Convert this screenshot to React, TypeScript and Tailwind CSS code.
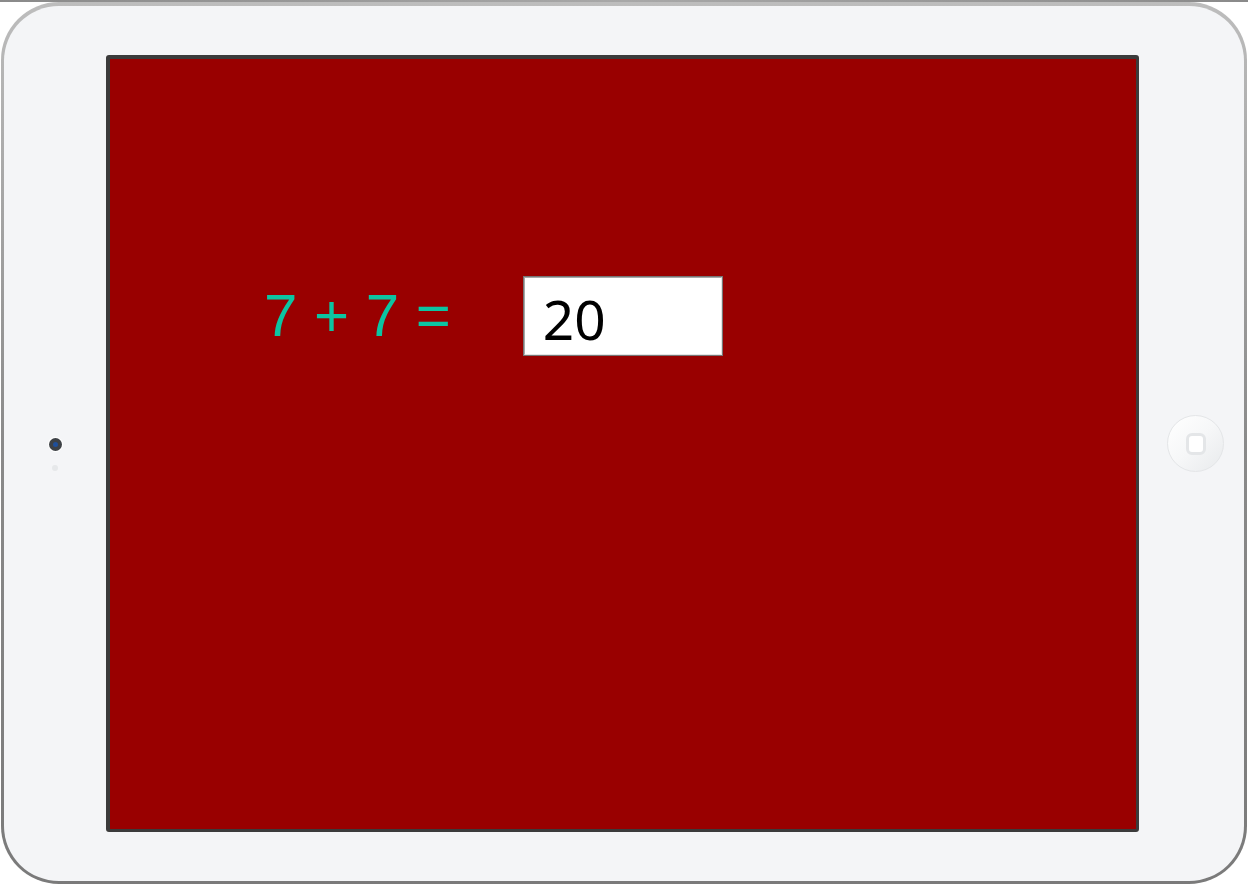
import React from "react";

export default function App() {
  return (
    <div className="flex h-[886px] w-[1248px] flex-col bg-white">
      <div className="h-[2px] bg-gradient-to-r from-[#8a8a8a] via-[#a8a8a8] to-[#8a8a8a]" />

      {/* bezel */}
      <div className="mx-[1px] mb-[2px] flex flex-1 rounded-[58px] bg-gradient-to-b from-[#bdbdbd] via-[#8a8a8a] to-[#7a7a7a] px-[3px] pb-[3px] pt-[4px]">
        <div className="flex flex-1 items-center rounded-[55px] bg-[#f4f5f7]">
          {/* camera */}
          <div className="flex w-[102px] flex-col items-center pt-[21px]">
            <div className="flex h-[13px] w-[13px] items-center justify-center rounded-full bg-[#3d4146] ring-1 ring-white">
              <div className="h-[5px] w-[5px] rounded-full bg-[#1f4f9a]" />
            </div>
            <div className="mt-[14px] h-[6px] w-[6px] rounded-full bg-[#e6e8ea]" />
          </div>

          {/* screen */}
          <div className="h-[777px] w-[1033px] rounded-[3px] border-b-[3px] border-l-4 border-r-[3px] border-t-4 border-[#3b3b3b] bg-[#990000]">
            <div className="flex items-center pl-[154px] pt-[217px]">
              <span
                className="text-[60px] leading-none text-[#0cc5a2]"
                style={{ fontFamily: '"Liberation Sans", Arial, sans-serif' }}
              >
                7 + 7 =
              </span>
              <div className="ml-[72px] border border-[#767676]">
                <input
                  readOnly
                  value="20"
                  className="h-[78px] w-[198px] border-b border-l border-r border-t border-b-[#e4e4e4] border-l-[#a8a8a8] border-r-[#e4e4e4] border-t-[#a8a8a8] bg-white pl-[18px] pt-[4px] text-[55px] leading-none text-black outline-none"
                  style={{ fontFamily: '"Noto Sans", "Open Sans", sans-serif' }}
                />
              </div>
            </div>
          </div>

          {/* home button */}
          <div className="flex flex-1 items-center justify-center pl-[8px]">
            <div className="flex h-[57px] w-[57px] items-center justify-center rounded-full border border-[#e4e6e8] bg-gradient-to-br from-white via-[#f6f7f8] to-[#e8eaec]">
              <div className="h-[22px] w-[20px] rounded-[6px] border-[3px] border-[#e4e6e8] bg-white" />
            </div>
          </div>
        </div>
      </div>
    </div>
  );
}
